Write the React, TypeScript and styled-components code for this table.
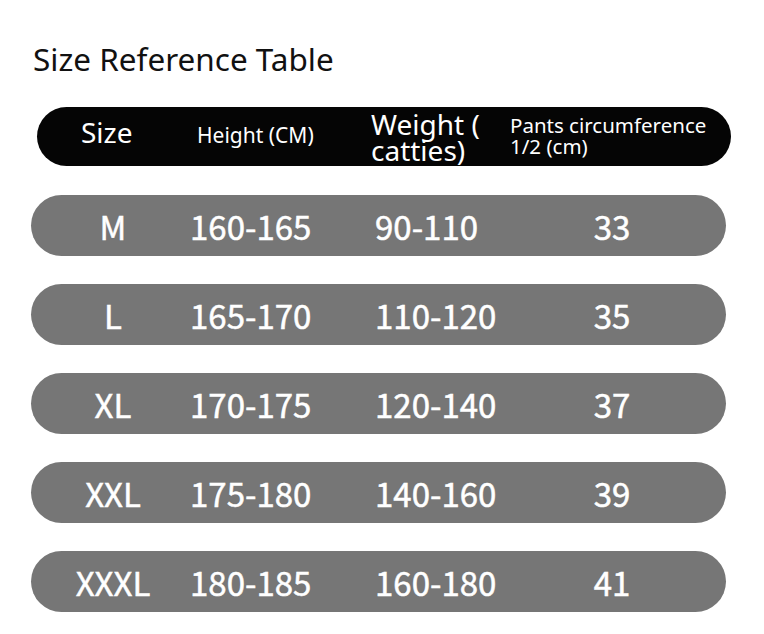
import * as React from "react";
import styled, { createGlobalStyle } from "styled-components";

const GlobalStyle = createGlobalStyle`
  html, body {
    margin: 0;
    padding: 0;
    background: #ffffff;
  }
  body {
    font-family: "Noto Sans", "Liberation Sans", sans-serif;
  }
`;

const Page = styled.div`
  width: 764px;
  height: 634px;
  box-sizing: border-box;
  padding: 41px 0 0 31px;
  overflow: hidden;
`;

const Title = styled.h1`
  margin: 0 0 30px 2px;
  font-family: "Noto Sans", "Liberation Sans", sans-serif;
  font-size: 31.5px;
  line-height: 36px;
  font-weight: 400;
  color: #111111;
`;

const Table = styled.div`
  display: flex;
  flex-direction: column;
  gap: 28px;
`;

const HeaderBar = styled.div`
  display: grid;
  grid-template-columns: 116px 174px 139px 1fr;
  align-items: center;
  width: 694px;
  height: 59px;
  box-sizing: border-box;
  margin-left: 6px;
  margin-bottom: 1px;
  padding-left: 44px;
  background: #050505;
  border-radius: 30px;
  color: #ffffff;
  font-family: "Noto Sans", "Liberation Sans", sans-serif;
`;

const HeadCell = styled.div<{ $size: number; $line: number; $lift: number }>`
  font-size: ${(p) => p.$size}px;
  line-height: ${(p) => p.$line}px;
  padding-bottom: ${(p) => p.$lift}px;
  white-space: nowrap;
`;

const Row = styled.div`
  display: grid;
  grid-template-columns: 154px 185px 145px 184px;
  align-items: center;
  width: 695px;
  height: 61px;
  box-sizing: border-box;
  padding-left: 5px;
  background: #767676;
  border-radius: 31px;
  color: #ffffff;
  font-family: "Noto Sans CJK SC", "Noto Sans", sans-serif;
  font-size: 33px;
  font-weight: 400;
  -webkit-text-stroke: 0.5px #ffffff;
`;

const Cell = styled.div<{ $align: "left" | "center"; $indent?: number }>`
  text-align: ${(p) => p.$align};
  padding-left: ${(p) => p.$indent ?? 0}px;
  white-space: nowrap;
`;

const sizes = [
  { size: "M", height: "160-165", weight: "90-110", pants: "33" },
  { size: "L", height: "165-170", weight: "110-120", pants: "35" },
  { size: "XL", height: "170-175", weight: "120-140", pants: "37" },
  { size: "XXL", height: "175-180", weight: "140-160", pants: "39" },
  { size: "XXXL", height: "180-185", weight: "160-180", pants: "41" },
];

export default function App() {
  return (
    <Page>
      <GlobalStyle />
      <Title>Size Reference Table</Title>
      <Table>
        <HeaderBar>
          <HeadCell $size={28} $line={34} $lift={10}>
            Size
          </HeadCell>
          <HeadCell $size={21} $line={26} $lift={4}>
            Height (CM)
          </HeadCell>
          <HeadCell $size={28} $line={26} $lift={0}>
            Weight (
            <br />
            catties)
          </HeadCell>
          <HeadCell $size={20.5} $line={21} $lift={2}>
            Pants circumference
            <br />
            1/2 (cm)
          </HeadCell>
        </HeaderBar>
        {sizes.map((r) => (
          <Row key={r.size}>
            <Cell $align="center">{r.size}</Cell>
            <Cell $align="left" $indent={-2}>
              {r.height}
            </Cell>
            <Cell $align="left">{r.weight}</Cell>
            <Cell $align="center">{r.pants}</Cell>
          </Row>
        ))}
      </Table>
    </Page>
  );
}
